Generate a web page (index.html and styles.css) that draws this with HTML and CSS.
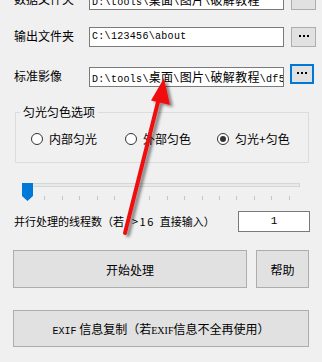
FILE: index.html
```html
<!DOCTYPE html>
<html lang="zh">
<head>
<meta charset="utf-8">
<link rel="stylesheet" href="styles.css">
</head>
<body>
<div class="app">
  <div class="row first">
    <span class="lbl">数据文件夹</span>
    <div class="field">D:\tools\<span class="cj">桌面</span>\<span class="cj">图片</span>\<span class="cj">破解教程</span></div>
    <button class="dots"><svg width="10" height="2" viewBox="0 0 10 2"><rect x="0" width="2" height="2"/><rect x="4" width="2" height="2"/><rect x="8" width="2" height="2"/></svg></button>
  </div>
  <div class="row second">
    <span class="lbl">输出文件夹</span>
    <div class="field">C:\123456\about</div>
    <button class="dots"><svg width="10" height="2" viewBox="0 0 10 2"><rect x="0" width="2" height="2"/><rect x="4" width="2" height="2"/><rect x="8" width="2" height="2"/></svg></button>
  </div>
  <div class="row third">
    <span class="lbl">标准影像</span>
    <div class="field">D:\tools\<span class="cj">桌面</span>\<span class="cj">图片</span>\<span class="cj">破解教程</span>\df5f5e5d.tif</div>
    <button class="dots focused"><svg width="10" height="2" viewBox="0 0 10 2"><rect x="0" width="2" height="2"/><rect x="4" width="2" height="2"/><rect x="8" width="2" height="2"/></svg></button>
  </div>

  <fieldset class="group">
    <legend>匀光匀色选项</legend>
    <div class="radios">
      <label class="radio"><span class="circle"></span>内部匀光</label>
      <label class="radio"><span class="circle"></span>外部匀色</label>
      <label class="radio"><span class="circle checked"></span>匀光+匀色</label>
    </div>
  </fieldset>

  <div class="slider">
    <div class="track"></div>
    <div class="ticks"><i></i><i></i><i></i><i></i><i></i><i></i><i></i><i></i><i></i><i></i><i></i><i></i><i></i><i></i><i></i><i></i></div>
    <svg class="thumb" width="11" height="18" viewBox="0 0 11 18"><path d="M0 0H11V13L5.5 18L0 13Z" fill="#0078d7"/></svg>
  </div>

  <div class="threads">
    <span class="tlabel">并行处理的线程数（若<span class="asc"> &gt;16 </span>直接输入）</span>
    <div class="num">1</div>
  </div>

  <div class="actions">
    <button class="btn start">开始处理</button>
    <button class="btn help">帮助</button>
  </div>

  <button class="btn exif"><span class="mono">EXIF</span> 信息复制（若<span class="mono2">EXIF</span>信息不全再使用）</button>

  <svg class="arrow" width="322" height="362" viewBox="0 0 322 362">
    <defs>
      <filter id="sh" x="-50%" y="-50%" width="200%" height="200%">
        <feDropShadow dx="3" dy="2" stdDeviation="1.8" flood-color="#000" flood-opacity="0.45"/>
      </filter>
    </defs>
    <g filter="url(#sh)">
      <line x1="125" y1="243" x2="158.5" y2="110" stroke="#f01010" stroke-width="4" stroke-linecap="round"/>
      <path d="M164 88 L170 115 L151 110.5 Z" fill="#f01010"/>
    </g>
  </svg>
</div>
</body>
</html>
```

FILE: styles.css
```css
* { box-sizing: border-box; }
html, body { margin: 0; padding: 0; }
body {
  background: #f0f0f0;
  width: 322px;
  height: 362px;
  overflow: hidden;
  font-family: "Noto Sans CJK SC", "Noto Sans", sans-serif;
  font-size: 12px;
  color: #000;
}
.app {
  position: relative;
  padding-left: 14px;
  width: 322px;
  height: 362px;
}
.row {
  display: grid;
  grid-template-columns: 68px 195px 25px;
  column-gap: 7px;
  height: 20px;
  align-items: center;
}
.row.first { margin-top: -10px; }
.row.second { margin-top: 17px; }
.row.third { margin-top: 20px; }
.lbl {
  font-size: 12px;
  line-height: 14px;
  white-space: nowrap;
  margin-top: -2px;
}
.field {
  height: 20px;
  background: #fff;
  border: 1px solid #7a7a7a;
  font-family: "Liberation Mono", "Noto Sans CJK SC", monospace;
  font-size: 10px;
  letter-spacing: 0.3px;
  line-height: 18px;
  padding-left: 2px;
  white-space: nowrap;
  overflow: hidden;
}
.field .cj {
  font-family: "Noto Sans CJK SC", sans-serif;
  font-size: 12px;
}
.dots {
  height: 20px;
  width: 25px;
  padding: 0;
  margin: 0;
  background: #e1e1e1;
  border: 1px solid #adadad;
  display: flex;
  align-items: center;
  justify-content: center;
  padding-bottom: 3px;
}
.dots svg { fill: #000; display: block; }
.dots.focused {
  border: 2px solid #0078d7;
  width: 24px;
  margin-left: -1px;
  align-self: start;
  margin-top: -3px;
}
.group {
  margin: 17px 0 0 1px;
  width: 294px;
  border: 1px solid #dcdcdc;
  padding: 13px 0 17px 0;
  min-inline-size: 0;
}
.group legend {
  margin-left: 4px;
  padding: 0 3px;
  font-size: 12px;
  line-height: 16px;
}
.radios {
  display: grid;
  grid-template-columns: 94px 92px auto;
  margin-left: 15px;
  height: 12px;
  align-items: center;
}
.radio {
  display: flex;
  align-items: center;
  gap: 6px;
  font-size: 12px;
  line-height: 12px;
  white-space: nowrap;
}
.circle {
  width: 12px;
  height: 12px;
  border-radius: 50%;
  border: 1px solid #333;
  background: #fff;
  display: flex;
  align-items: center;
  justify-content: center;
  flex: none;
}
.circle.checked::after {
  content: "";
  width: 6px;
  height: 6px;
  border-radius: 50%;
  background: #333;
}
.slider {
  position: relative;
  margin: 20px 0 0 8px;
  width: 278px;
  height: 24px;
}
.track {
  margin-top: 6px;
  height: 4px;
  background: #e7eaea;
  border: 1px solid #d6d6d6;
}
.ticks {
  margin-top: 9px;
  height: 4px;
  padding: 0 5px 0 5px;
  width: 273px;
  display: flex;
  justify-content: space-between;
}
.ticks i {
  display: block;
  width: 1px;
  height: 4px;
  background: #c4c4c4;
}
.thumb {
  position: absolute;
  left: 0;
  top: 0;
  display: block;
}
.threads {
  margin-top: 4px;
  width: 296px;
  display: flex;
  align-items: center;
  justify-content: space-between;
}
.tlabel {
  font-size: 11px;
  white-space: nowrap;
  margin-top: -1px;
}
.tlabel .asc { letter-spacing: 1.5px; padding: 0 1px 0 4px; }
.num {
  width: 72px;
  height: 21px;
  background: #fff;
  border: 1px solid #7a7a7a;
  font-family: "Liberation Mono", monospace;
  font-size: 11px;
  line-height: 19px;
  text-align: center;
}
.btn {
  background: #e1e1e1;
  border: 1px solid #adadad;
  font-family: "Noto Sans CJK SC", sans-serif;
  font-size: 12px;
  color: #000;
  padding: 0;
  margin: 0;
}
.actions {
  display: flex;
  gap: 9px;
  margin: 18px 0 0 -1px;
}
.start { width: 234px; height: 38px; }
.help { width: 53px; height: 38px; }
.exif {
  display: block;
  margin: 22px 0 0 -1px;
  width: 296px;
  height: 37px;
  white-space: nowrap;
}
.mono { font-family: "Liberation Mono", monospace; font-size: 10px; }
.mono2 { font-family: "Liberation Serif", serif; font-size: 10px; }
.arrow {
  position: absolute;
  left: 0;
  top: 0;
  pointer-events: none;
}
```
